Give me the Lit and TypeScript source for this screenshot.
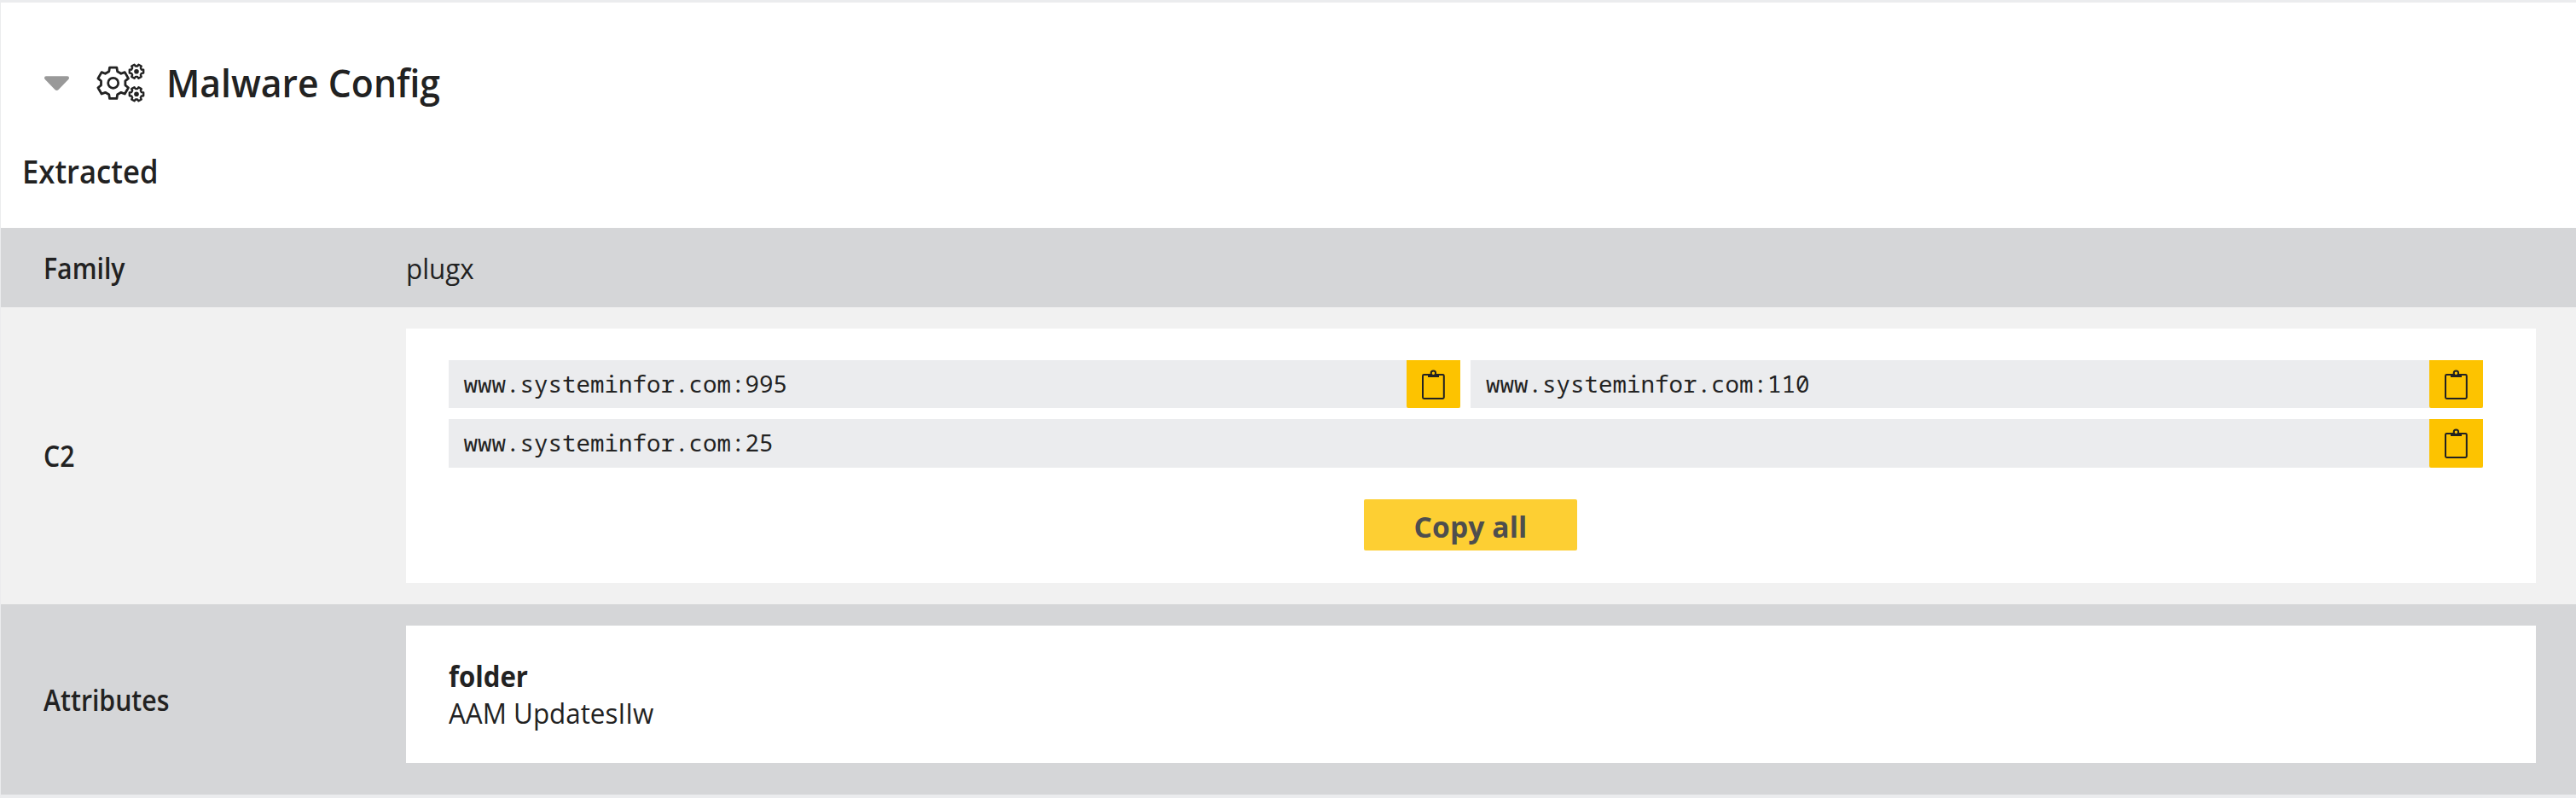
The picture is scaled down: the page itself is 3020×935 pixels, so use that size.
import { LitElement, html, css, svg } from "lit";
import { customElement, property } from "lit/decorators.js";

/** Outline of a six-toothed gear around (cx, cy). */
function gearPath(cx: number, cy: number, outer: number, inner: number, start: number): string {
  const pts: string[] = [];
  const at = (r: number, deg: number) => {
    const a = (deg * Math.PI) / 180;
    pts.push(`${(cx + r * Math.cos(a)).toFixed(2)} ${(cy + r * Math.sin(a)).toFixed(2)}`);
  };
  for (let i = 0; i < 6; i++) {
    const c = start + i * 60;
    at(inner, c - 20);
    at(outer, c - 13);
    at(outer, c + 13);
    at(inner, c + 20);
  }
  return `M${pts.join("L")}Z`;
}

@customElement("gears-icon")
class GearsIcon extends LitElement {
  static styles = css`
    :host { display: block; width: 60px; height: 48px; }
    svg { display: block; }
    .line { fill: none; stroke: #222; stroke-linejoin: round; }
    .dot { fill: #222; }
  `;
  render() {
    return html`<svg width="60" height="48" viewBox="0 0 60 48">
      <path class="line" stroke-width="2.8" d=${gearPath(20.7, 24.3, 18.6, 14.4, 30)}></path>
      <circle class="line" stroke-width="2.7" cx="20.7" cy="24.3" r="6"></circle>
      ${[10.7, 37.3].map(
        (y) => svg`<path class="line" stroke-width="2.4" d=${gearPath(48, y, 8.4, 6.3, 0)}></path>
          <circle class="dot" cx="48" cy=${y} r="2.8"></circle>`
      )}
    </svg>`;
  }
}

@customElement("copy-field")
class CopyField extends LitElement {
  @property() value = "";
  static styles = css`
    :host { display: flex; flex: 1 1 40%; margin: 0 12px 13px 0; height: 56px; background: #ebecee; }
    .text {
      flex: 1; padding-left: 17.6px; line-height: 56px; color: #222; white-space: pre;
      font-family: "Noto Sans Mono", "Liberation Mono", monospace; font-size: 27.5px;
    }
    .copy {
      width: 63px; padding: 0; border: 0; background: #fdc300; border-radius: 0 0 2px 2px;
      display: flex; align-items: flex-start;
    }
    svg { display: block; }
  `;
  render() {
    return html`<span class="text">${this.value}</span>
      <button class="copy" aria-label="Copy">
        <svg width="63" height="56" viewBox="0 0 63 56" fill="none" stroke="#222">
          <rect x="19" y="17" width="24.8" height="28" rx="1.4" stroke-width="2"></rect>
          <rect x="25" y="16" width="13" height="4" fill="#222" stroke="none"></rect>
          <circle cx="31.4" cy="15.2" r="2.7" stroke-width="2" fill="#fdc300"></circle>
        </svg>
      </button>`;
  }
}

@customElement("app-root")
class AppRoot extends LitElement {
  private c2 = ["www.systeminfor.com:995", "www.systeminfor.com:110", "www.systeminfor.com:25"];

  static styles = css`
    :host {
      display: block; box-sizing: border-box; height: 935px;
      border: solid #ebecee; border-width: 3px 0 4px 1px;
      background: #fff; color: #222;
      font-family: "Open Sans", "Noto Sans", sans-serif; font-size: 33.6px; line-height: 43.5px;
    }
    .fit { display: inline-block; transform-origin: 0 50%; white-space: nowrap; }
    .header { display: flex; align-items: center; height: 187px; padding-left: 51px; box-sizing: border-box; }
    .caret { width: 29px; height: 18px; margin-top: 2px; }
    .gears { margin: 1px 0 0 31px; }
    .title { margin: 1px 0 0 23px; font-size: 45px; font-weight: 600; line-height: 60px; transform: scaleX(0.949); }
    .subhead { height: 77px; padding-left: 25px; font-size: 37.4px; font-weight: 600; line-height: 21px; }
    .subhead .fit { transform: scaleX(0.926); }
    .row { display: grid; grid-template-columns: 425px 1fr; align-items: center; padding-left: 50px; box-sizing: border-box; }
    .row.family { height: 93px; background: #d5d6d8; padding-top: 1px; }
    .row.servers { height: 348px; background: #f1f1f1; }
    .row.attrs { height: 223px; background: #d5d6d8; }
    .label { font-weight: 600; padding-top: 2px; }
    .plain { padding-top: 2px; }
    .label .fit { transform: scaleX(0.9); }
    .fit.regular { transform: scaleX(0.934); }
    .fit.bold { font-weight: 700; transform: scaleX(0.926); }
    .card { align-self: start; margin: 25px 47px 0 0; background: #fff; box-sizing: border-box; padding-left: 50px; }
    .servers .card { height: 298px; padding-top: 37px; }
    .attrs .card { height: 161px; padding-top: 38px; }
    .key { margin-bottom: -1px; }
    .fields { display: flex; flex-wrap: wrap; padding-right: 50.2px; }
    .fields .last { height: 57px; margin-bottom: 0; }
    .actions { display: flex; justify-content: center; padding: 37px 51px 0 0; }
    .all {
      width: 250px; height: 60px; padding: 5px 0 0; border: 0; border-radius: 2px;
      background: #fdcf33; color: #4e4e4e; font: inherit; font-weight: 700;
    }
    .all .fit { letter-spacing: 0.1px; }
  `;

  render() {
    return html`
      <div class="header">
        <svg class="caret" viewBox="0 0 29 18"><path fill="#999" d="M2 0.3H27Q29 .3 29 2.2Q29 3.1 28 4.2L16.4 16.2Q14.5 17.8 12.6 16.2L1 4.2Q0 3.1 0 2.2Q0 .3 2 .3Z"></path></svg>
        <gears-icon class="gears"></gears-icon>
        <h2 class="title fit">Malware Config</h2>
      </div>
      <div class="subhead"><span class="fit">Extracted</span></div>
      <div class="row family">
        <div class="label"><span class="fit">Family</span></div>
        <div class="plain"><span class="fit regular">plugx</span></div>
      </div>
      <div class="row servers">
        <div class="label"><span class="fit">C2</span></div>
        <div class="card">
          <div class="fields">
            ${this.c2.map((v, i) => html`<copy-field class=${i === 2 ? "last" : ""} .value=${v}></copy-field>`)}
          </div>
          <div class="actions"><button class="all"><span class="fit">Copy all</span></button></div>
        </div>
      </div>
      <div class="row attrs">
        <div class="label"><span class="fit">Attributes</span></div>
        <div class="card">
          <div class="key"><span class="fit bold">folder</span></div>
          <div><span class="fit regular">AAM UpdatesIIw</span></div>
        </div>
      </div>
    `;
  }
}
